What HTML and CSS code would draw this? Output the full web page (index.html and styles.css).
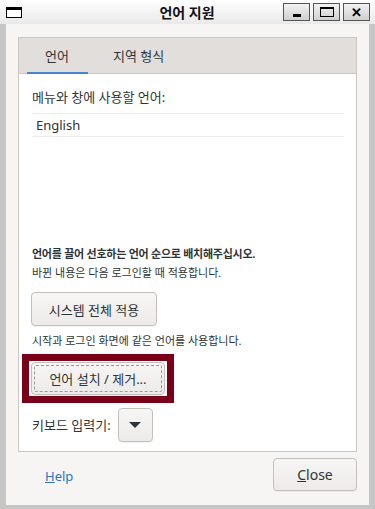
FILE: index.html
```html
<!DOCTYPE html>
<html lang="ko">
<head>
    <meta charset="UTF-8">
    <meta name="viewport" content="width=device-width, initial-scale=1.0">
    <title>언어 지원</title>
    <link rel="stylesheet" href="styles.css">
</head>
<body>
    <div class="titlebar">
        <span class="app-icon"></span>
        <span class="title">언어 지원</span>
        <div class="wm-buttons">
            <span class="wm-btn"><span class="wm-min"></span></span>
            <span class="wm-btn"><span class="wm-max"></span></span>
            <span class="wm-btn wm-close">✕</span>
        </div>
    </div>

    <div class="frame">
        <div class="window">
            <div class="notebook">
                <div class="tabs">
                    <span class="tab active">언어</span>
                    <span class="tab">지역 형식</span>
                </div>
                <div class="page">
                    <p class="label">메뉴와 창에 사용할 언어:</p>
                    <ul class="lang-list">
                        <li>English</li>
                    </ul>

                    <p class="hint-bold">언어를 끌어 선호하는 언어 순으로 배치해주십시오.</p>
                    <p class="hint">바뀐 내용은 다음 로그인할 때 적용합니다.</p>
                    <button class="btn apply-btn">시스템 전체 적용</button>
                    <p class="hint">시작과 로그인 화면에 같은 언어를 사용합니다.</p>

                    <div class="highlight">
                        <button class="btn install-btn"><span class="focus">언어 설치 / 제거...</span></button>
                    </div>

                    <div class="keyboard-row">
                        <span class="label">키보드 입력기:</span>
                        <button class="btn combo"><span class="arrow"></span></button>
                    </div>
                </div>
            </div>

            <div class="footer">
                <a class="help" href="#"><u>H</u>elp</a>
                <button class="btn close-btn"><u>C</u>lose</button>
            </div>
        </div>
    </div>
</body>
</html>
```

FILE: styles.css
```css
:root {
    --frame-grey: #c6c6c6;
    --window-bg: #f6f5f4;
    --tab-bg: #e1dedb;
    --border: #cdc7c2;
    --text: #2e3436;
    --blue: #4a86cf;
    --focus-red: #7a0019;
    --ui-font: "Noto Sans", "Noto Sans CJK KR", sans-serif;
}

* {
    box-sizing: border-box;
}

body {
    margin: 0;
    width: 375px;
    height: 509px;
    overflow: hidden;
    font-family: var(--ui-font);
    color: var(--text);
    background: var(--frame-grey);
}

p {
    margin: 0;
}

/* Window manager title bar */
.titlebar {
    height: 24px;
    display: flex;
    align-items: center;
    padding: 0 6px;
    background: linear-gradient(#ffffff, #e9e9e9);
}

.app-icon {
    width: 16px;
    height: 11px;
    border: 1px solid #000;
    border-top-width: 3px;
    background: #fff;
    margin-top: 1px;
}

.title {
    flex: 1;
    text-align: center;
    font-weight: bold;
    font-size: 14px;
    color: #111;
    padding-left: 69px;
}

.wm-buttons {
    display: flex;
    gap: 2px;
    margin-right: -1px;
}

.wm-btn {
    width: 27px;
    height: 18px;
    border: 1px solid #555;
    background: linear-gradient(#f2f2f2, #cfcfcf);
    display: flex;
    align-items: center;
    justify-content: center;
}

.wm-btn + .wm-btn {
    margin-left: 1px;
}

.wm-min {
    width: 8px;
    height: 3px;
    background: #000;
    margin-top: 7px;
}

.wm-max {
    width: 14px;
    height: 10px;
    border: 1px solid #000;
    border-top-width: 2px;
}

.wm-close {
    font-size: 13px;
    font-weight: bold;
    color: #000;
    line-height: 1;
}

/* Frame and dialog body */
.frame {
    padding: 0 6px 4px;
}

.window {
    height: 481px;
    background: var(--window-bg);
    padding: 13px 12px 0;
    display: flex;
    flex-direction: column;
}

.notebook {
    height: 415px;
    border: 1px solid var(--border);
    display: flex;
    flex-direction: column;
}

.tabs {
    height: 36px;
    background: var(--tab-bg);
    border-bottom: 1px solid var(--border);
    display: flex;
    padding-left: 8px;
}

.tab {
    font-size: 13px;
    line-height: 36px;
    padding: 0 19px 0 18px;
    margin-right: 7px;
    color: #2e3436;
}

.tab.active {
    box-shadow: inset 0 -3px 0 var(--blue);
    height: 37px;
}

.page {
    flex: 1;
    background: #fff;
    padding: 14px 12px 0 13px;
    display: flex;
    flex-direction: column;
    align-items: flex-start;
}

.label {
    font-size: 13px;
    line-height: 18px;
}

.lang-list {
    list-style: none;
    margin: 7px 0 0;
    padding: 0;
    align-self: stretch;
    border-top: 1px solid #ececec;
    border-bottom: 1px solid #ececec;
}

.lang-list li {
    font-size: 13px;
    line-height: 22px;
    padding-left: 4px;
}

.hint-bold {
    margin-top: 107px;
    font-size: 11px;
    font-weight: bold;
    letter-spacing: -0.25px;
    line-height: 19px;
}

.hint {
    font-size: 11px;
    line-height: 19px;
}

.btn {
    font-family: var(--ui-font);
    font-size: 13px;
    color: var(--text);
    border: 1px solid #c4bfba;
    border-radius: 4px;
    background: linear-gradient(#f7f6f5, #ecebe9);
    box-shadow: 0 1px 0 rgba(0, 0, 0, 0.05);
    cursor: pointer;
}

.apply-btn {
    margin: 10px 0 5px -1px;
    width: 126px;
    height: 34px;
}

.highlight {
    margin: 4px 0 0 -10px;
    border: 7px solid var(--focus-red);
    padding: 1px 2px;
    background: #fff;
}

.install-btn {
    width: 134px;
    height: 33px;
    padding: 2px;
}

.focus {
    display: flex;
    align-items: center;
    justify-content: center;
    height: 100%;
    border: 1px dashed #9a9a9a;
    border-radius: 2px;
}

.keyboard-row {
    margin-top: 5px;
    display: flex;
    align-items: center;
    gap: 7px;
}

.combo {
    width: 35px;
    height: 34px;
    display: flex;
    align-items: center;
    justify-content: center;
}

.arrow {
    width: 0;
    height: 0;
    border-left: 6px solid transparent;
    border-right: 6px solid transparent;
    border-top: 6px solid #2e3436;
}

/* Dialog buttons */
.footer {
    flex: 1;
    display: flex;
    justify-content: space-between;
    align-items: flex-start;
    padding: 6px 0 0 27px;
}

.help {
    font-size: 13px;
    color: #2a76c6;
    text-decoration: none;
    margin-top: 9px;
}

.close-btn {
    width: 84px;
    height: 33px;
    font-size: 14px;
}
```
